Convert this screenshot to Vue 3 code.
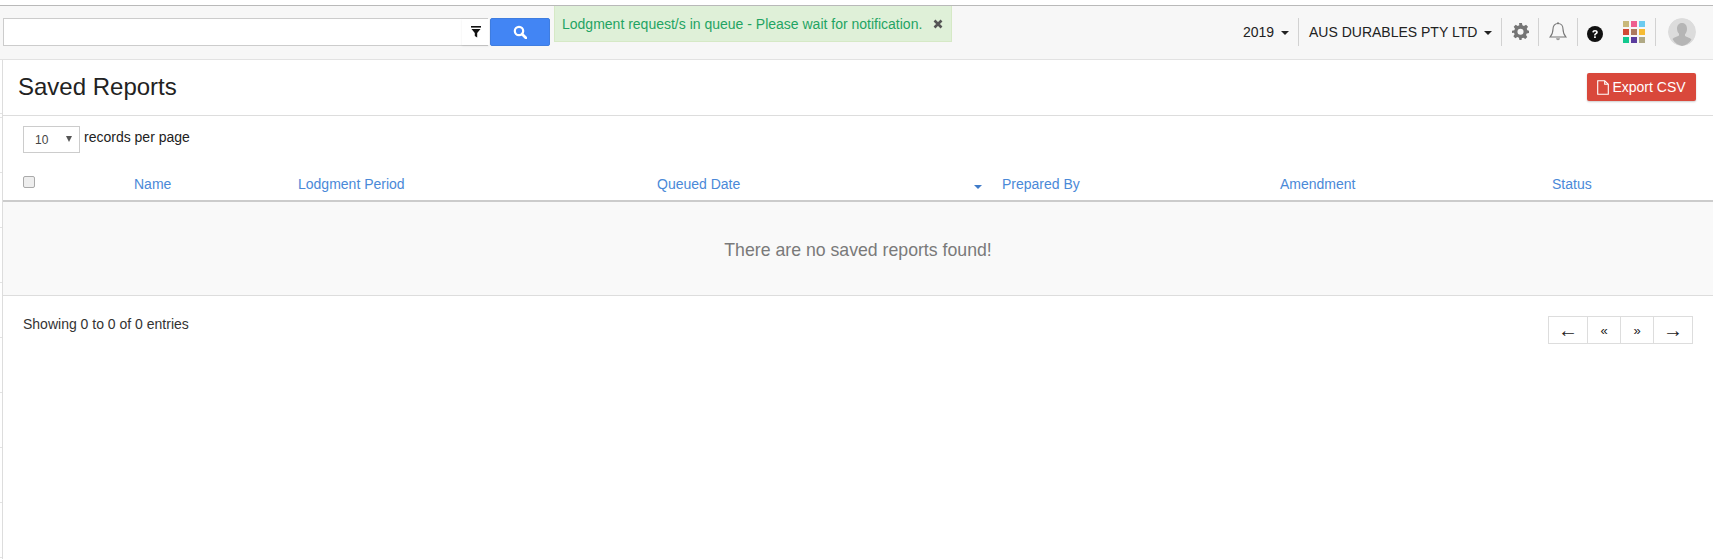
<script setup>
const colors = ['#c9b97a','#ee5f8f','#6ccbef','#d24a36','#ad7a5f','#f6bb33','#13c98f','#5b3d9e','#b0a985']
</script>

<template>
  <div class="page">
    <div class="topline"></div>
    <header class="bar">
      <div class="search">
        <input class="search-input" type="text" />
        <span class="filter">
          <svg width="12" height="12" viewBox="0 0 12 12"><rect x="1" y="0" width="10" height="1.6" fill="#111"/><path d="M1.500 3h9L7.200 7v4.500L4.800 10V7z" fill="#111"/></svg>
        </span>
      </div>
      <button class="search-btn">
        <svg width="14" height="14" viewBox="0 0 14 14"><circle cx="6" cy="6" r="4.200" fill="none" stroke="#fff" stroke-width="2.200"/><path d="M9 9l4 4" stroke="#fff" stroke-width="2.600" stroke-linecap="round"/></svg>
      </button>
      <div class="alert">
        <span>Lodgment request/s in queue - Please wait for notification.</span>
        <svg class="close" width="10" height="10" viewBox="0 0 10 10"><path d="M1.500 1.500l7 7M8.500 1.500l-7 7" stroke="#555" stroke-width="2.600"/></svg>
      </div>
      <nav class="tools">
        <div class="tool year">2019<i class="caret"></i></div>
        <div class="tool company">AUS DURABLES PTY LTD<i class="caret"></i></div>
        <div class="tool gear">
          <svg width="17" height="17" viewBox="0 0 24 24"><path fill="#757575" fill-rule="evenodd" d="M10 0h4l.7 3.300 2.200.9L19.800 2.400l2.800 2.800-1.800 2.900.9 2.200L24 11v3l-3.300.7-.9 2.200 1.800 2.900-2.800 2.800-2.900-1.800-2.200.9L13.500 24h-3l-.7-3.300-2.200-.9-2.900 1.800-2.800-2.800 1.800-2.900-.9-2.200L0 14v-3l3.300-.7.9-2.200-1.800-2.900 2.800-2.800 2.900 1.800 2.200-.9zM12 8a4.300 4.300 0 1 0 0 8.600A4.300 4.300 0 0 0 12 8z"/></svg>
        </div>
        <div class="tool bell">
          <svg width="18" height="20" viewBox="0 0 18 20"><path d="M9 1.500c-3.300 0-5 2.500-5 5.500 0 4-1.200 6-3 8h16c-1.800-2-3-4-3-8 0-3-1.700-5.500-5-5.500z" fill="none" stroke="#777" stroke-width="1.100"/><path d="M7 16.200c.2 1.300 1 2 2 2s1.800-.7 2-2z" fill="#999"/><circle cx="9" cy="1.300" r="1" fill="#777"/></svg>
        </div>
        <div class="tool help">
          <svg width="16" height="16" viewBox="0 0 16 16"><circle cx="8" cy="8" r="8" fill="#111"/><path d="M5.300 6.200C5.400 4.700 6.500 4 8 4c1.600 0 2.800.9 2.800 2.200 0 1.100-.7 1.600-1.400 2-.6.400-.8.600-.8 1.200H7.100c0-1.200.4-1.700 1.100-2.200.5-.3.900-.5.900-1 0-.4-.4-.8-1.100-.8-.7 0-1.100.4-1.200 1z" fill="#fff"/><rect x="7.100" y="10.300" width="1.700" height="1.700" fill="#fff"/></svg>
        </div>
        <div class="tool apps">
          <div class="grid"><span v-for="c in colors" :key="c" :style="{ background: c }"></span></div>
        </div>
        <div class="tool avatar-wrap">
          <div class="avatar">
            <svg width="28" height="28" viewBox="0 0 28 28"><circle cx="14" cy="14" r="14" fill="#dcdcdc"/><path d="M14 5c-3.300 0-5 2.500-5 5.500 0 2.200.8 4 2 5.200v1.800c-1.500 1-5 1.700-6.500 3.500A14 14 0 0 0 14 28a14 14 0 0 0 9.500-6.500c-1.500-1.800-5-2.500-6.500-3.500v-1.800c1.200-1.200 2-3 2-5.200C19 7.500 17.300 5 14 5z" fill="#b5b5b5"/></svg>
          </div>
        </div>
      </nav>
    </header>

    <div class="body">
      <aside class="strip"></aside>
      <main class="main">
        <div class="title-row">
          <h1>Saved Reports</h1>
          <button class="export">
            <svg width="12" height="15" viewBox="0 0 12 15"><path d="M.7.700h7l3.600 3.600v10H.7zM7.700.700v3.600h3.600" fill="none" stroke="#fff" stroke-width="1.100"/></svg>
            Export CSV
          </button>
        </div>
        <div class="length">
          <div class="select"><span>10</span><i></i></div>
          <span class="length-label">records per page</span>
        </div>
        <div class="thead">
          <div class="cb"><span class="checkbox"></span></div>
          <div>Name</div>
          <div>Lodgment Period</div>
          <div class="sorted">Queued Date<i class="sort"></i></div>
          <div>Prepared By</div>
          <div>Amendment</div>
          <div>Status</div>
        </div>
        <div class="empty">There are no saved reports found!</div>
        <div class="foot">
          <div class="info">Showing 0 to 0 of 0 entries</div>
          <div class="pager">
            <span class="wide first">←</span><span>«</span><span>»</span><span class="wide">→</span>
          </div>
        </div>
      </main>
    </div>
  </div>
</template>

<style>
html, body { margin: 0; background: #fff; }
</style>

<style scoped>
.page { width: 1713px; height: 559px; overflow: hidden; font-family: "Liberation Sans", Arial, sans-serif; font-size: 14px; color: #222; display: flex; flex-direction: column; background: #fff; }
.topline { height: 5px; border-bottom: 1px solid #b9b9b9; flex: none; }
.bar { height: 54px; box-sizing: border-box; flex: none; background: #f7f7f7; border-bottom: 1px solid #e2e2e2; display: flex; align-items: flex-start; padding-left: 3px; }
.search { width: 485px; height: 28px; margin-top: 12px; position: relative; flex: none; }
.search-input { box-sizing: border-box; width: 100%; height: 100%; border: 1px solid #ccc; border-right: 0; background: #fff; padding: 0; display: block; outline: none; }
.filter { position: absolute; right: -1px; top: 1px; width: 27px; height: 26px; background: #fff; display: flex; align-items: flex-start; justify-content: center; padding-top: 7px; box-sizing: border-box; box-shadow: 0 1px 2px rgba(0,0,0,.08); }
.search-btn { width: 60px; height: 28px; margin: 12px 0 0 2px; border: 1px solid #3f7de0; border-radius: 2px; background: #4285f4; padding: 0; display: flex; align-items: center; justify-content: center; flex: none; }
.alert { box-sizing: border-box; height: 36px; width: 398px; margin-left: 4px; background: #dff0d8; border: 1px solid #d6e9c6; border-top: 0; color: #1fa463; font-size: 14px; display: flex; align-items: center; padding: 0 8px 0 7px; justify-content: space-between; flex: none; }
.alert span { white-space: nowrap; }
.tools { margin-left: auto; display: flex; align-items: stretch; height: 28px; margin-top: 12px; padding-right: 17px; }
.tool { display: flex; align-items: center; justify-content: center; box-sizing: border-box; height: 28px; border-right: 1px solid #d2d2d2; white-space: nowrap; color: #222; }
.caret { display: inline-block; width: 0; height: 0; border-left: 4px solid transparent; border-right: 4px solid transparent; border-top: 4px solid #222; margin-left: 7px; margin-top: 2px; }
.year { width: 57px; padding-left: 1px; justify-content: flex-start; }
.company { width: 203px; padding-left: 10px; justify-content: flex-start; }
.gear { width: 37px; padding-bottom: 1px; }
.bell { width: 39px; }
.help { width: 34px; padding-top: 4px; border-right: 0; }
.apps { width: 44px; padding-left: 11px; justify-content: flex-start; }
.avatar-wrap { border-right: 0; width: 40px; justify-content: flex-end; }
.grid { display: grid; grid-template-columns: repeat(3, 6px); grid-auto-rows: 6px; gap: 2px; }
.avatar { width: 28px; height: 28px; border-radius: 50%; overflow: hidden; }
.avatar svg { display: block; }

.body { flex: 1; display: flex; min-height: 0; }
.strip { width: 2px; flex: none; border-right: 1px solid #ddd; background: repeating-linear-gradient(#fff 0 3px, #e3e3e3 3px 4px, #fff 4px 55px); background-position: 0 54px; }
.main { flex: 1; min-width: 0; }
.title-row { height: 56px; box-sizing: border-box; border-bottom: 1px solid #ddd; display: flex; align-items: center; justify-content: space-between; padding: 0 17px 0 15px; }
h1 { margin: 0; font-size: 24px; font-weight: 400; color: #222; line-height: 1; position: relative; top: -1px; }
.export { height: 28px; width: 109px; margin-top: -1px; background: #d9483b; border: 0; border-radius: 2px; color: #fff; font: 14px "Liberation Sans", Arial, sans-serif; display: flex; align-items: center; justify-content: center; gap: 3px; padding: 0; box-shadow: 0 1px 2px rgba(0,0,0,.2); }
.length { display: flex; align-items: flex-start; padding: 10px 0 0 20px; height: 50px; box-sizing: border-box; }
.select { width: 57px; height: 27px; box-sizing: border-box; border: 1px solid #ccc; display: flex; align-items: center; justify-content: space-between; padding: 0 7px 0 11px; font-size: 12px; color: #444; }
.select i { width: 0; height: 0; border-left: 3px solid transparent; border-right: 3px solid transparent; border-top: 6px solid #555; margin-top: -2px; }
.length-label { margin-left: 4px; line-height: 23px; }
.thead { display: grid; grid-template-columns: 131px 164px 359px 345px 278px 272px 1fr; height: 36px; box-sizing: border-box; border-bottom: 2px solid #ccc; color: #4a89d8; align-items: start; line-height: 20px; padding-top: 8px; }
.cb { padding-left: 20px; }
.checkbox { display: block; box-sizing: border-box; width: 12px; height: 12px; border: 1px solid #aaa; border-radius: 2px; background: #eee; margin-top: 2px; }
.sorted { position: relative; }
.sort { position: absolute; left: 317px; top: 11px; width: 0; height: 0; border-left: 4px solid transparent; border-right: 4px solid transparent; border-top: 4px solid #3f7bc8; }
.empty { height: 94px; box-sizing: border-box; padding-top: 3px; background: #f9f9f9; border-bottom: 1px solid #ddd; display: flex; align-items: center; justify-content: center; font-size: 17.7px; color: #7a7a7a; }
.foot { display: flex; justify-content: space-between; align-items: flex-start; padding: 18px 20px 0 20px; }
.info { line-height: 20px; color: #333; }
.pager { display: flex; margin-top: 2px; height: 28px; border: 1px solid #ddd; box-sizing: border-box; }
.pager span { display: flex; align-items: center; justify-content: center; box-sizing: border-box; width: 33px; border-left: 1px solid #ddd; font-size: 13px; color: #222; }
.pager .wide { width: 39px; font-size: 20px; }
.pager .first { width: 38px; border-left: 0; }
</style>
